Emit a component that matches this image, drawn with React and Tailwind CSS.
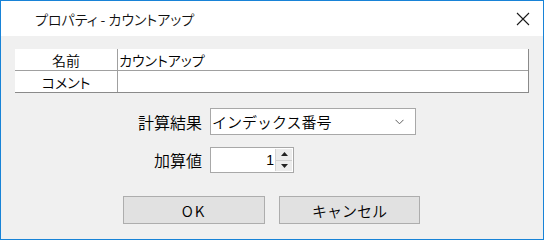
import React from 'react';

const jp = "font-['Noto_Sans_CJK_JP','Noto_Sans_CJK_SC',sans-serif]";

function CloseIcon() {
    return (
        <svg width="14" height="14" viewBox="0 0 14 14" className="block">
            <path d="M1 1 L13 13 M13 1 L1 13" stroke="#1a1a1a" strokeWidth="1.1" fill="none" />
        </svg>
    );
}

function Chevron() {
    return (
        <svg width="9" height="6" viewBox="0 0 9 6" className="block">
            <path d="M0.5 0.8 L4.5 4.8 L8.5 0.8" stroke="#5f5f5f" strokeWidth="1" fill="none" />
        </svg>
    );
}

function Spinner() {
    return (
        <div className="w-[17px] h-full flex flex-col border-l border-[#d4d4d4]">
            <div className="flex-1 flex items-center justify-center bg-[#ececec] border-b border-[#cfcfcf]">
                <svg width="7" height="4" viewBox="0 0 7 4" className="block">
                    <path d="M0 4 L3.5 0 L7 4 Z" fill="#222" />
                </svg>
            </div>
            <div className="flex-1 flex items-center justify-center bg-[#ececec]">
                <svg width="7" height="4" viewBox="0 0 7 4" className="block">
                    <path d="M0 0 L7 0 L3.5 4 Z" fill="#222" />
                </svg>
            </div>
        </div>
    );
}

export default function App() {
    return (
        <div className={`w-[544px] h-[241px] bg-white ${jp} font-[350] text-black`}>
            <div className="w-[544px] h-[240px] border border-[#1883d7] flex flex-col">
                {/* title bar */}
                <div className="h-[35px] bg-white flex items-center justify-between pl-[34px] pr-[13px]">
                    <span className="text-[14px] leading-none [font-feature-settings:'palt'] text-[#111]">
                        プロパティ - カウントアップ
                    </span>
                    <CloseIcon />
                </div>

                {/* body */}
                <div className="flex-1 bg-[#f0f0f0] flex flex-col">
                    <div className="ml-[14px] mt-[13px] w-[514px] bg-white border-r border-[#8a8a8a] text-[14px] leading-none [font-feature-settings:'palt']">
                        <div className="grid grid-cols-[102px_1fr] h-[22px] border-b border-[#a0a0a0]">
                            <div className="flex items-center justify-center">名前</div>
                            <div className="flex items-center border-l border-[#a0a0a0] pl-[1px]">カウントアップ</div>
                        </div>
                        <div className="grid grid-cols-[102px_1fr] h-[22px] border-b border-[#8a8a8a]">
                            <div className="flex items-center justify-center">コメント</div>
                            <div className="flex items-center border-l border-[#a0a0a0]"></div>
                        </div>
                    </div>

                    <div className="mt-[15px] flex items-center gap-[8px] text-[15px] leading-none">
                        <div className="w-[201px] text-right text-[16px]">計算結果</div>
                        <div className="w-[206px] h-[27px] bg-white border border-[#a8a8a8] flex items-center justify-between pl-[1px] pr-[11px]">
                            <span>インデックス番号</span>
                            <Chevron />
                        </div>
                    </div>

                    <div className="mt-[12px] flex items-center gap-[8px] text-[15px] leading-none">
                        <div className="w-[201px] text-right text-[16px]">加算値</div>
                        <div className="w-[84px] h-[26px] bg-white border border-[#a8a8a8] flex items-stretch">
                            <div className="flex-1 flex items-center justify-end pr-[1px] font-['Liberation_Sans',sans-serif] text-[14px]">1</div>
                            <div className="py-[1px] pr-[1px] h-full">
                                <Spinner />
                            </div>
                        </div>
                    </div>

                    <div className="mt-[23px] ml-[122px] flex gap-[14px] text-[15px] leading-none">
                        <button className="w-[142px] h-[28px] bg-[#e1e1e1] border border-[#adadad] flex items-center justify-center tracking-[2px]">
                            OK
                        </button>
                        <button className="w-[141px] h-[28px] bg-[#e1e1e1] border border-[#adadad] flex items-center justify-center">
                            キャンセル
                        </button>
                    </div>
                </div>
            </div>
        </div>
    );
}
